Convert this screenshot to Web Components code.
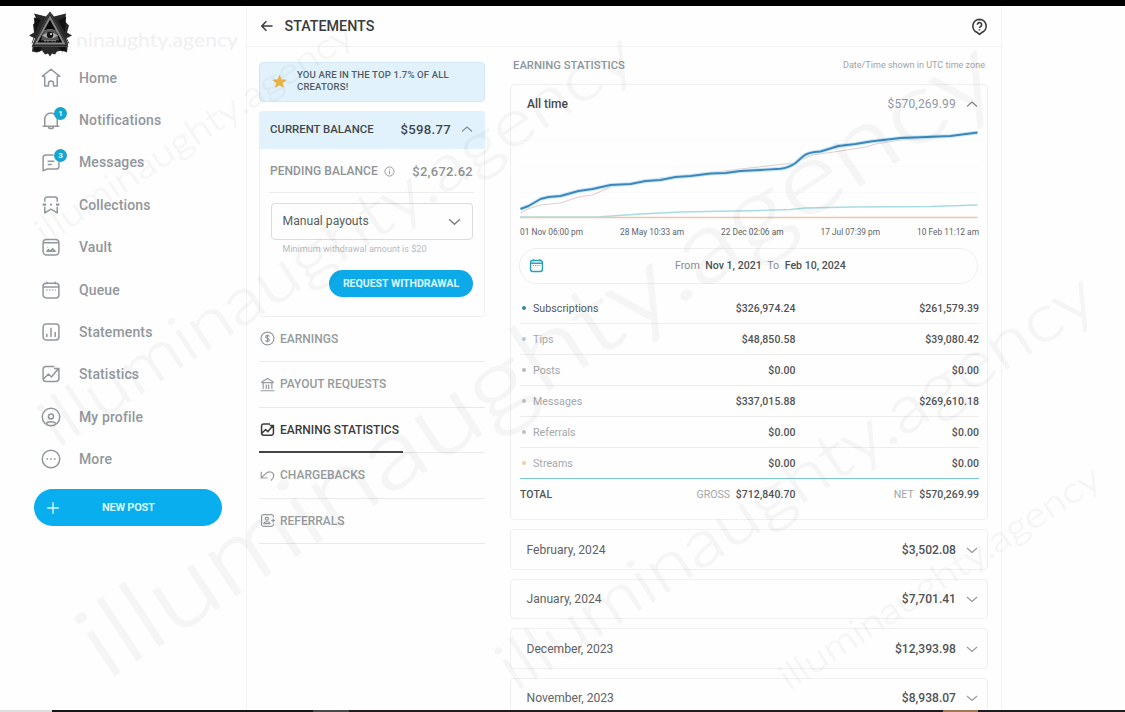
<!DOCTYPE html>
<html lang="en">
<head>
<meta charset="utf-8">
<title>Statements</title>
<style>
body {
    margin: 0;
    height: 712px;
    overflow: hidden;
    background: #fefefe;
    font-family: Roboto, "Liberation Sans", sans-serif;
    color: #4a4d50;
}
</style>
</head>
<body>
<statements-page></statements-page>
<script>
const ICONS = {
    home: '<path d="M4.500 10H1.500L12 1.500 22.500 10H19.500M4.500 10v11.500H9v-3a3 3 0 0 1 6 0v3h4.500V10"/>',
    bell: '<path d="M2 19.500h20M4.500 19.500V11a7.500 7.500 0 0 1 7.500-7.500c3 0 7.500 3 7.500 7.500v8.500M9 20c0 3 6 3 6 0"/>',
    chat: '<path d="M21.500 11v6c0 2-1.500 3.500-3.500 3.500H7L2.500 22.500V7c0-2 1.500-3.500 3.500-3.500h9M8 11h8M8 15h5"/>',
    collections: '<path d="M4.500 8V5.500a3 3 0 0 1 3-3h9a3 3 0 0 1 3 3V8M4.500 14v7.500L12 17l7.500 4.500V14"/><path d="M2 11.500h4M11 11.500h2M18 11.500h4" stroke-width="2.600"/>',
    vault: '<rect x="2.500" y="3" width="19" height="18.500" rx="4"/><path d="M3 7h18M8 12v.5M7 17l2-2 2 2 3-3 3 3z"/>',
    queue: '<rect x="2.500" y="4" width="19" height="17.500" rx="3.500"/><path d="M2.500 8.500h19M7 2v3M17 2v3"/><path d="M6 12h12" stroke-dasharray="2 1.500" stroke-width="1.200"/>',
    bars: '<rect x="2.500" y="2.500" width="19" height="19" rx="3.500"/><path d="M7 14v4M12 7v11M17 12v6"/>',
    stats: '<path d="M16 3H6a3.500 3.500 0 0 0-3.500 3.500v11A3.500 3.500 0 0 0 6 21h12a3.500 3.500 0 0 0 3.500-3.500V11M3 18l6-6 3.500 3.500L20.500 6M15.500 5.500h6V11"/>',
    profile: '<circle cx="12" cy="12" r="10.500"/><circle cx="12" cy="11.500" r="3"/><path d="M6.500 20c1-3 10-3 11 0"/>',
    more: '<circle cx="12" cy="12" r="10.500"/><path d="M6.500 12h2M11 12h2M15.500 12h2" stroke-width="2"/>',
    plus: '<path d="M12 2v20M2 12h20"/>',
    back: '<path d="M21.500 12H3M11 4l-8 8 8 8"/>',
    help: '<path d="M12 2a9.500 9.500 0 0 1 3.500 18.300L12 23l-3.500-2.700A9.500 9.500 0 0 1 12 2z"/><path d="M9 9.500a3 3 0 1 1 4.500 2.500c-1 .7-1.500 1-1.500 2.200M12 16v1.500"/>',
    up: '<path d="m2 17 10-9 10 9"/>',
    down: '<path d="m2 8 10 9 10-9"/>',
    info: '<circle cx="12" cy="12" r="10"/><path d="M12 10.500V18M12 6v2"/>',
    dollar: '<circle cx="12" cy="12" r="10.300"/><path d="M15 9c-.5-3-6-2.500-6 .3 0 3 6 2 6 5 0 3-5.500 3.200-6 .2M12 5.500v13"/>',
    bank: '<path d="M1 22h22M2 9h20M2.500 8 12 2.500 21.500 8M5 10v9M10 12v7M14 12v7M19 10v9"/>',
    undo: '<path d="M2 6v10h10M2.500 15.500 9 9c5-5 13-3 13 3 0 4-2 6-4.500 8"/>',
    referral: '<path d="M21.500 7V5.500a3 3 0 0 0-3-3h-13a3 3 0 0 0-3 3v13a3 3 0 0 0 3 3h13a3 3 0 0 0 3-3V17M18 12h6M21 9v6"/><circle cx="11" cy="9" r="2.500"/><path d="M6 17c1-4 9-4 10 0z"/>',
    star: '<path fill="currentColor" d="m12 1.500 3 7.300 8 .6-6.100 5.100L18.800 22 12 17.800 5.200 22l1.900-7.500L1 9.400l8-.6z"/>'
};

function define(name, render) {
    customElements.define(name, class extends HTMLElement {
        constructor() {
            super();
            this.attachShadow({mode: 'open'});
        }
        connectedCallback() {
            this.shadowRoot.innerHTML = render(this);
        }
    });
}

define('ui-icon', el => `
    <style>
    :host { display: block; flex: none; width: 20px; height: 20px; }
    svg { display: block; width: 100%; height: 100%; overflow: visible; }
    </style>
    <svg viewBox="0 0 24 24" fill="none" stroke="currentColor" stroke-linejoin="round"
        stroke-width="${el.getAttribute('weight') || 1.8}">${ICONS[el.getAttribute('name')]}</svg>
`);

define('brand-logo', () => `
    <style>
    :host { display: flex; align-items: flex-start; height: 50px; }
    svg { flex: none; }
    .logo { margin-top: 1px; }
    .name { margin-top: 16px; }
    </style>
    <svg class="logo" width="44" height="47" viewBox="0 0 44 46">
        <path fill="#282828" d="m22 1 4 5 12-3-1 8 4 4-2 7 5 3-6 3 2 5-1 9-5-2-5 1-2 3-3-1-2 3-2-3-3 1-3-4-5 2-5-1 1-8 2-5-6-3 5-3-1-8 4-4-3-7 8 2 4 1z"/>
        <path fill="#111" d="m6 7 7 2-6 13zM38 6l-8 4 7 12zM6 35l8 2-2 4-6-1zM38 35l-8 2 4 4 4-1z"/>
        <path fill="#080808" stroke="#858585" stroke-width="2" d="M22 7 8 33h28z"/>
        <path fill="none" stroke="#484848" d="M22 2 4 36h36zM6 27l-2 6M38 27l3 6"/>
        <path fill="#555" d="M15 22q7-6 14 0l2 8H13z"/>
        <path fill="#aaa" d="M14 25q8-6 16 0-7 6-16 0"/>
        <circle cx="22" cy="24.500" r="3.200" fill="#161616"/>
        <circle cx="23" cy="23.500" r="1" fill="#eee"/>
        <path fill="none" stroke="#777" d="M15 21q7-4 14 0M16 30h12M17 32v-2M20 32v-2M24 32v-2M27 32v-2"/>
    </svg>
    <svg class="name" width="168" height="30">
        <text x="4" y="22" font-family="Lato" font-size="20" fill="#f0f0f0" textLength="162" lengthAdjust="spacingAndGlyphs">ninaughty.agency</text>
    </svg>
`);

define('nav-item', el => `
    <style>
    :host {
        display: flex;
        align-items: center;
        gap: 18px;
        height: 42.4px;
        color: #92979c;
        font-size: 14px;
        font-weight: 500;
        letter-spacing: .13px;
    }
    .icon { position: relative; }
    .badge {
        position: absolute;
        top: -3px;
        right: -6px;
        width: 13px;
        height: 13px;
        border-radius: 50%;
        background: #16a5d0;
        color: #e8fbff;
        font-size: 8px;
        font-weight: 700;
        line-height: 13px;
        text-align: center;
    }
    </style>
    <div class="icon">
        <ui-icon name="${el.getAttribute('icon')}"></ui-icon>
        ${el.hasAttribute('count') ? `<span class="badge">${el.getAttribute('count')}</span>` : ''}
    </div>
    <slot></slot>
`);

define('side-nav', () => `
    <style>
    :host { display: block; box-sizing: border-box; width: 246px; padding: 3px 0 0 28px; }
    nav { margin: -2.600px 0 0 13px; }
    .post {
        display: flex;
        align-items: center;
        box-sizing: border-box;
        width: 188px;
        height: 36.500px;
        margin: 9px 0 0 6px;
        padding: 0 12px;
        border-radius: 19px;
        background: #08aeee;
        color: #d9f7ff;
        font-size: 11px;
        font-weight: 700;
        letter-spacing: -.25px;
    }
    .post ui-icon { width: 14px; height: 14px; }
    .post span { margin-left: 42px; }
    </style>
    <brand-logo></brand-logo>
    <nav>
        <nav-item icon="home">Home</nav-item>
        <nav-item icon="bell" count="1">Notifications</nav-item>
        <nav-item icon="chat" count="3">Messages</nav-item>
        <nav-item icon="collections">Collections</nav-item>
        <nav-item icon="vault">Vault</nav-item>
        <nav-item icon="queue">Queue</nav-item>
        <nav-item icon="bars">Statements</nav-item>
        <nav-item icon="stats">Statistics</nav-item>
        <nav-item icon="profile">My profile</nav-item>
        <nav-item icon="more">More</nav-item>
    </nav>
    <div class="post"><ui-icon name="plus" weight="2.400"></ui-icon><span>NEW POST</span></div>
`);

define('top-bar', () => `
    <style>
    :host {
        display: flex;
        align-items: center;
        height: 40px;
        padding: 0 13px 0 13px;
        border-bottom: 1px solid #f1f1f1;
        color: #3b3b3b;
        font-size: 14.300px;
        font-weight: 500;
    }
    .back { width: 14px; height: 14px; margin-right: 10.500px; }
    .help { width: 17px; height: 17px; margin-left: auto; }
    </style>
    <ui-icon class="back" name="back" weight="2.600"></ui-icon>
    <slot></slot>
    <ui-icon class="help" name="help" weight="2.300"></ui-icon>
`);

define('top-banner', () => `
    <style>
    :host {
        display: flex;
        align-items: center;
        gap: 10px;
        box-sizing: border-box;
        height: 39.500px;
        padding: 0 0 1px 12px;
        border: 1px solid #d3e8f2;
        border-radius: 4px;
        background: #e1f2fc;
        font-size: 9.600px;
        letter-spacing: .13px;
        font-weight: 500;
        line-height: 12px;
        color: #555d63;
        white-space: nowrap;
    }
    ui-icon { width: 15px; height: 15px; color: #e9b243; }
    </style>
    <ui-icon name="star" weight="0.500"></ui-icon>
    <div><slot></slot></div>
`);

define('balance-card', () => `
    <style>
    :host {
        display: block;
        box-sizing: border-box;
        height: 206px;
        margin-top: 9px;
        border: 1px solid #efefef;
        border-radius: 4px;
    }
    .current, .pending { display: flex; align-items: center; box-sizing: border-box; font-weight: 500; }
    .current {
        height: 38.500px;
        margin: -1px -1px 0;
        padding: 0 12px 1px 11px;
        border-radius: 4px 4px 0 0;
        background: #e1f2fc;
        font-size: 11.400px;
        color: #41484d;
    }
    .current b { margin: 0 10px 0 auto; font-size: 13.200px; font-weight: 500; letter-spacing: .25px; }
    .current ui-icon { width: 12px; height: 12px; color: #858f96; }
    .pending {
        height: 43.500px;
        margin: 0 10px 0 9px;
        padding: 2px 1px 0;
        border-bottom: 1px solid #eee;
        color: #909396;
        font-size: 12px;
        letter-spacing: .05px;
    }
    .pending ui-icon { width: 11px; height: 11px; margin-left: 6px; }
    .pending b { margin-left: auto; font-size: 13px; font-weight: 500; letter-spacing: .28px; }
    .select {
        display: flex;
        align-items: center;
        justify-content: space-between;
        box-sizing: border-box;
        height: 37px;
        margin: 10px 11px 0;
        padding: 0 11px 0 10.500px;
        border: 1px solid #dcdcdc;
        border-radius: 4px;
        color: #5b5e61;
        font-size: 12.200px;
    }
    .select ui-icon { width: 13px; height: 13px; color: #777; }
    .hint { margin: 3px 0 0 22.500px; color: #b6babd; font-size: 9.050px; line-height: 12px; }
    .request {
        width: 144px;
        margin: 15px 11px 0 auto;
        border-radius: 14px;
        background: #0daaea;
        color: #d9f7ff;
        font-size: 10.600px;
        font-weight: 700;
        line-height: 27px;
        text-align: center;
        letter-spacing: -.05px;
    }
    </style>
    <div class="current">CURRENT BALANCE <b>$598.77</b><ui-icon name="up" weight="2.200"></ui-icon></div>
    <div class="pending">PENDING BALANCE <ui-icon name="info" weight="2"></ui-icon><b>$2,672.62</b></div>
    <div class="select">Manual payouts <ui-icon name="down" weight="2.400"></ui-icon></div>
    <div class="hint">Minimum withdrawal amount is $20</div>
    <div class="request">REQUEST WITHDRAWAL</div>
`);

define('tab-link', el => `
    <style>
    :host {
        display: block;
        box-sizing: border-box;
        height: 45.500px;
        border-bottom: 1px solid #e9e9e9;
        color: #969a9d;
        font-size: 12px;
        font-weight: 500;
    }
    :host([active]) { color: #3b3b3b; }
    div {
        display: inline-flex;
        align-items: center;
        gap: 5px;
        box-sizing: border-box;
        height: 45px;
        padding: 1px 4px 0 1px;
        border-bottom: 2px solid transparent;
    }
    :host([active]) div { border-color: #444; }
    ui-icon { width: 15px; height: 15px; }
    </style>
    <div><ui-icon name="${el.getAttribute('icon')}" weight="${el.hasAttribute('active') ? 2.4 : 1.9}"></ui-icon><slot></slot></div>
`);

define('earnings-chart', () => `
    <style>
    :host { display: block; margin: 0 8px 0 9px; }
    svg { display: block; width: 459px; height: 101px; }
    div { display: flex; justify-content: space-between; color: #5f6265; font-size: 8.350px; line-height: 12px; margin: 3px 0 0; }
    </style>
    <svg viewBox="519.500 122 459 101" fill="none" stroke-linejoin="round">
        <path stroke="#fafafa" d="M519 140.500h459M519 166.500h459M519 192.500h459"/>
        <path stroke="#a9dbe3" stroke-width="1.300" d="M519 217H597L640 214 680 212 760 210.500 790 209.500 805 208 850 207 930 206.500 977 205"/>
        <path stroke="#efc5ae" stroke-width="1.400" d="M519 217.500H977"/>
        <path stroke="#e4cfd0" stroke-width="1.200" d="M520 213 530 208 540 205 560 203 578 197 592 195 610 187 632 183 660 178 690 175 740 169 775 165 793 163 812 155 840 151 865 147 875 144 900 140 940 137 977 134"/>
        <path stroke="#c9e9fb" stroke-width="4" d="M520 209 528 206 540 199 548 197 560 196 578 191 592 189 610 185 630 184 645 181 660 180 675 177 690 176 710 173.500 725 173 740 171 760 170 780 168.700Q788 168 795 163L803 156Q808 152 820 151.500L838 146 855 144 870 141.500 900 138 950 136 977 132.500"/>
        <path stroke="#3f87b8" stroke-width="1.900" d="M520 209 528 206 540 199 548 197 560 196 578 191 592 189 610 185 630 184 645 181 660 180 675 177 690 176 710 173.500 725 173 740 171 760 170 780 168.700Q788 168 795 163L803 156Q808 152 820 151.500L838 146 855 144 870 141.500 900 138 950 136 977 132.500"/>
    </svg>
    <div><span>01 Nov 06:00 pm</span><span>28 May 10:33 am</span><span>22 Dec 02:06 am</span><span>17 Jul 07:39 pm</span><span>10 Feb 11:12 am</span></div>
`);

define('earning-row', el => `
    <style>
    :host {
        display: grid;
        grid-template-columns: 1fr 120px 183.500px;
        align-items: center;
        box-sizing: border-box;
        height: 31.060px;
        margin: 0 8px 0 9px;
        border-bottom: 1px solid #ededed;
        color: #a5a7a9;
        font-size: 10.700px;
    }
    :host([active]) { color: #55585b; }
    :host([last]) { border-bottom: 1.500px solid #7cc8d9; }
    span { display: flex; align-items: center; gap: 7px; letter-spacing: .02px; }
    i { width: 4px; height: 4px; margin-left: 2px; border-radius: 50%; background: ${el.getAttribute('dot')}; }
    b { color: #505356; font-size: 10.500px; font-weight: 500; text-align: right; letter-spacing: .07px; }
    </style>
    <span><i></i><slot></slot></span><b>${el.getAttribute('gross')}</b><b>${el.getAttribute('net')}</b>
`);

define('all-time', () => `
    <style>
    :host {
        display: block;
        box-sizing: border-box;
        height: 436.500px;
        border: 1px solid #f0f0f0;
        border-radius: 4px;
    }
    .head { display: flex; align-items: center; box-sizing: border-box; height: 37px; padding: 2px 9px 0 16px; color: #484b4e; font-size: 12px; font-weight: 500; }
    .head b { margin: 0 10px 0 auto; color: #9297a3; font-weight: 400; letter-spacing: .2px; }
    .head ui-icon { width: 12px; height: 12px; color: #888; }
    .range {
        display: flex;
        align-items: center;
        box-sizing: border-box;
        height: 36.500px;
        margin: 10px 9px 9px 8px;
        padding: 0 9px;
        border: 1px solid #efefef;
        border-radius: 18px;
        color: #898c8f;
        font-size: 10.700px;
    }
    .range ui-icon { width: 15px; height: 15px; color: #2ca1b9; }
    .range div { display: flex; gap: 5.500px; margin-left: 131px; }
    .range b { color: #4e5154; font-weight: 500; font-size: 10.600px; }
    .total {
        display: grid;
        grid-template-columns: 1fr 130px 183.500px;
        align-items: center;
        height: 30px;
        margin: 0 8px 0 9px;
        color: #a4a6a8;
        font-size: 10.600px;
        text-align: right;
    }
    .total b { color: #505356; font-size: 10.500px; font-weight: 500; letter-spacing: .07px; margin-left: 3px; }
    .total > b { margin: 0; text-align: left; }
    </style>
    <div class="head">All time <b>$570,269.99</b><ui-icon name="up" weight="2.300"></ui-icon></div>
    <earnings-chart></earnings-chart>
    <div class="range"><ui-icon name="queue" weight="2.300"></ui-icon><div>From <b>Nov 1, 2021</b> To <b>Feb 10, 2024</b></div></div>
    <earning-row active dot="#39899c" gross="$326,974.24" net="$261,579.39">Subscriptions</earning-row>
    <earning-row dot="#abd0da" gross="$48,850.58" net="$39,080.42">Tips</earning-row>
    <earning-row dot="#bbb7bd" gross="$0.00" net="$0.00">Posts</earning-row>
    <earning-row dot="#c9c3c3" gross="$337,015.88" net="$269,610.18">Messages</earning-row>
    <earning-row dot="#bdc0c5" gross="$0.00" net="$0.00">Referrals</earning-row>
    <earning-row last dot="#ead2a6" gross="$0.00" net="$0.00">Streams</earning-row>
    <div class="total"><b>TOTAL</b><span>GROSS <b>$712,840.70</b></span><span>NET <b>$570,269.99</b></span></div>
`);

define('month-row', el => `
    <style>
    :host {
        display: flex;
        align-items: center;
        box-sizing: border-box;
        height: 40.500px;
        margin-top: 9px;
        padding: .5px 9px 0 15.500px;
        border: 1px solid #f0f0f0;
        border-radius: 4px;
        color: #606366;
        font-size: 12.100px;
    }
    b { margin: 0 10px 0 auto; color: #505356; font-weight: 500; }
    ui-icon { width: 12px; height: 12px; color: #999; }
    </style>
    <slot></slot><b>${el.getAttribute('amount')}</b><ui-icon name="down" weight="2.300"></ui-icon>
`);

// x, y of the baseline start, length and font size of each diagonal line
const MARKS = [
    [106, 681, 1075, 99],
    [57, 449, 697, 65],
    [515, 692, 701, 65],
    [45, 245, 372, 35],
    [789, 691, 376, 35]
];

define('water-mark', () => `
    <style>
    :host { position: absolute; top: 0; left: 0; pointer-events: none; }
    text { font-family: Lato, sans-serif; font-weight: 300; fill: #000; stroke: #000; }
    svg { opacity: .032; }
    </style>
    <svg width="1125" height="712">
        ${MARKS.map(([x, y, len, size]) => `<text transform="translate(${x} ${y}) rotate(-33.3)" font-size="${size}" stroke-width="${size * 0.014}" textLength="${len}" lengthAdjust="spacingAndGlyphs">illuminaughty.agency</text>`).join('')}
    </svg>
`);

define('statements-page', () => `
    <style>
    :host {
        display: flex;
        flex-direction: column;
        box-sizing: border-box;
        height: 712px;
        border-top: 6px solid #000;
    }
    .page { display: flex; flex: 1; min-height: 0; overflow: hidden; }
    main { box-sizing: border-box; width: 756px; border: solid #f4f4f4; border-width: 0 1px; flex: none; }
    .columns { display: grid; grid-template-columns: 226px 478px; gap: 25px; padding-left: 12px; }
    .left { padding-top: 15px; }
    .title { display: flex; align-items: center; justify-content: space-between; height: 36.500px; padding: 0 3px; color: #8d969b; font-size: 11.300px; font-weight: 500; }
    small { color: #a1a4a7; font-size: 9.050px; font-weight: 400; }
    footer { height: 2px; background: linear-gradient(90deg, #ddd 52px, #18151b 52px 313px, #4a484b 313px 349px, #211a20 349px 943px, #a27855 943px 978px, #201b20 978px); }
    </style>
    <div class="page">
        <side-nav></side-nav>
        <main>
            <top-bar>STATEMENTS</top-bar>
            <div class="columns">
                <div class="left">
                    <top-banner>YOU ARE IN THE TOP 1.7% OF ALL<br>CREATORS!</top-banner>
                    <balance-card></balance-card>
                    <tab-link icon="dollar">EARNINGS</tab-link>
                    <tab-link icon="bank">PAYOUT REQUESTS</tab-link>
                    <tab-link icon="stats" active>EARNING STATISTICS</tab-link>
                    <tab-link icon="undo">CHARGEBACKS</tab-link>
                    <tab-link icon="referral">REFERRALS</tab-link>
                </div>
                <div>
                    <div class="title">EARNING STATISTICS <small>Date/Time shown in UTC time zone</small></div>
                    <all-time></all-time>
                    <month-row amount="$3,502.08">February, 2024</month-row>
                    <month-row amount="$7,701.41">January, 2024</month-row>
                    <month-row amount="$12,393.98">December, 2023</month-row>
                    <month-row amount="$8,938.07">November, 2023</month-row>
                </div>
            </div>
        </main>
    </div>
    <footer></footer>
    <water-mark></water-mark>
`);
</script>
</body>
</html>
